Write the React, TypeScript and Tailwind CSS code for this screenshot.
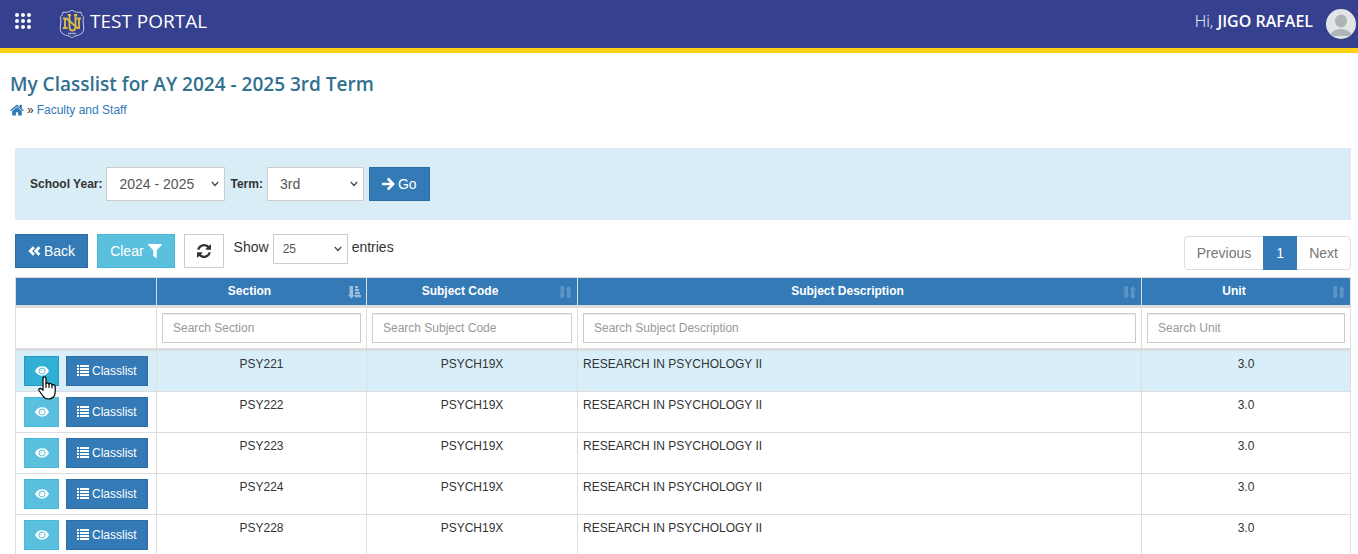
import { FaFilter } from "react-icons/fa";

const columns = [
  { name: "Section", sorted: true },
  { name: "Subject Code", sorted: false },
  { name: "Subject Description", sorted: false },
  { name: "Unit", sorted: false },
];

const classes = [
  { section: "PSY221", code: "PSYCH19X", description: "RESEARCH IN PSYCHOLOGY II", unit: "3.0" },
  { section: "PSY222", code: "PSYCH19X", description: "RESEARCH IN PSYCHOLOGY II", unit: "3.0" },
  { section: "PSY223", code: "PSYCH19X", description: "RESEARCH IN PSYCHOLOGY II", unit: "3.0" },
  { section: "PSY224", code: "PSYCH19X", description: "RESEARCH IN PSYCHOLOGY II", unit: "3.0" },
  { section: "PSY228", code: "PSYCH19X", description: "RESEARCH IN PSYCHOLOGY II", unit: "3.0" },
];

function Crest() {
  return (
    <svg viewBox="0 0 26 30" className="h-[30px] w-[26px]" fill="none" aria-hidden="true">
      <path
        d="M13 1.2C10 3.4 6.500 3.600 3.800 3.200C3.800 5.500 2.800 7 1.200 8C3 12 1 16 1.200 20C1.500 25 6 26 9 26.800C11 27.300 12.300 28 13 29C13.700 28 15 27.300 17 26.800C20 26 24.500 25 24.800 20C25 16 23 12 24.800 8C23.200 7 22.200 5.500 22.200 3.200C19.500 3.600 16 3.400 13 1.200Z"
        stroke="#c3cbe8"
        strokeWidth="1"
      />
      <g stroke="#d8bb48" strokeWidth="1.900">
        <path d="M6 9.500V19M3.800 9.500H7.500L18.500 19H20V9.500M3.800 19H8.500M17.500 9.500H22" />
        <path d="M10.500 6V17.500Q10.500 21.500 13.500 21.500T16.500 17.500V6M8.800 6H12M15 6H18.200" />
      </g>
      <path d="M9 24.500H17" stroke="#c3cbe8" strokeWidth="1.500" strokeDasharray="1.500 .6" />
    </svg>
  );
}

function HomeIcon() {
  return (
    <svg viewBox="0 0 1664 1400" className="mb-px h-3 w-[14px]" fill="currentColor" aria-hidden="true">
      <path
        transform="translate(-64 -180)"
        d="M1472 992v480q0 26-19 45t-45 19h-384v-384h-256v384h-384q-26 0-45-19t-19-45v-480q0-1 .5-3t.5-3l575-474 575 474q1 2 1 6zm223-69l-62 74q-8 9-21 11h-3q-13 0-21-7l-692-577-692 577q-12 8-24 7-13-2-21-11l-62-74q-8-10-7-23.5t11-21.500l719-599q32-26 76-26t76 26l244 204v-195q0-14 9-23t23-9h192q14 0 23 9t9 23v408l219 182q10 8 11 21.500t-7 23.500z"
      />
    </svg>
  );
}

function RefreshIcon() {
  return (
    <svg viewBox="128 128 1536 1536" className="size-[14px]" fill="currentColor" aria-hidden="true">
      <path d="M1639 1056q0 5-1 7-64 268-268 434.500t-478 166.500q-146 0-282.500-55t-243.500-157l-129 129q-19 19-45 19t-45-19-19-45v-448q0-26 19-45t45-19h448q26 0 45 19t19 45-19 45l-137 137q71 66 161 102t187 36q134 0 250-65t186-179q11-17 53-117 8-23 30-23h192q13 0 22.500 9.500t9.500 22.500zm25-800v448q0 26-19 45t-45 19h-448q-26 0-45-19t-19-45 19-45l138-138q-148-137-349-137-134 0-250 65t-186 179q-11 17-53 117-8 23-30 23h-199q-13 0-22.500-9.500t-9.500-22.500v-7q65-268 270-434.500t480-166.500q146 0 284 55.500t245 156.500l130-129q19-19 45-19t45 19 19 45z" />
    </svg>
  );
}

function BackIcon() {
  return (
    <svg viewBox="0 0 13 12" className="h-3 w-[13px]" fill="none" stroke="currentColor" strokeWidth="2.700" aria-hidden="true">
      <path d="M5.900 2.200L2.200 6L5.900 9.800M11.400 2.200L7.700 6L11.400 9.800" />
    </svg>
  );
}

function GoIcon() {
  return (
    <svg viewBox="0 0 13 14" className="h-[14px] w-[13px]" fill="none" stroke="currentColor" strokeWidth="2.500" aria-hidden="true">
      <path d="M0 7H11M5.800 1.500L11.300 7L5.800 12.500" />
    </svg>
  );
}

function EyeIcon() {
  return (
    <svg viewBox="0 0 14 10" className="h-[10px] w-[14px]" aria-hidden="true">
      <path fill="currentColor" d="M7 .3C3.800 .3 1.200 2.300 0 5C1.200 7.700 3.800 9.700 7 9.700S12.800 7.700 14 5C12.800 2.300 10.200 .3 7 .3Z" />
      <circle cx="7" cy="5" r="3" fill="none" stroke="#4bb8d9" strokeWidth=".9" />
      <path d="M5.700 5Q5.700 3.700 7 3.700" fill="none" stroke="#4bb8d9" strokeWidth=".6" />
    </svg>
  );
}

function ListIcon() {
  return (
    <svg viewBox="0 0 12 12" className="size-3" fill="currentColor" aria-hidden="true">
      <path d="M0 0h2v2H0zM3 0h9v2H3zM0 3h2v2H0zM3 3h9v2H3zM0 6h2v2H0zM3 6h9v2H3zM0 9h2v2H0zM3 9h9v2H3z" />
    </svg>
  );
}

function SortIcon({ sorted }: { sorted: boolean }) {
  if (sorted) {
    return (
      <svg viewBox="0 0 14 14" className="size-[14px] opacity-50" fill="currentColor" aria-hidden="true">
        <path d="M1.500 1H5v9h2L3.300 13.500L0 10h1.500zM7 1h3v2.300H7zM7 4h4v2.300H7zM7 7h5v2.300H7zM7 10h6v2.300H7z" />
      </svg>
    );
  }
  return (
    <svg viewBox="0 0 14 14" className="size-[14px] opacity-20" fill="currentColor" aria-hidden="true">
      <path d="M1.500 1H5v9h1.500L3.200 13.500L0 10h1.500zM8 13h3.500V4.500h1.500L9.700 1L6.500 4.500H8z" />
    </svg>
  );
}

function HandCursor() {
  return (
    <svg viewBox="0 0 18 24" className="pointer-events-none absolute top-[20px] left-[14px] z-10 h-6 w-[18px]" aria-hidden="true">
      <path
        d="M5 2.500Q5 .8 6.500.8T8 2.500V7.500Q10 6 11 8Q13 6.500 14 9Q16.500 8 17.200 10.500V16Q17.200 19 15.500 21Q13.500 23 10.500 23Q7 23 5 20L1 14.500Q.3 12.500 2.500 12.300L5 14Z"
        fill="white"
        stroke="black"
        strokeWidth="1.200"
      />
      <path d="M8 7.500v4.500M11 8V12M14 9V12.500" stroke="black" strokeWidth="1.100" fill="none" />
    </svg>
  );
}

function Chevron() {
  return (
    <svg viewBox="0 0 8 6" className="pointer-events-none absolute top-1/2 right-[6px] h-[6px] w-2 -translate-y-1/2" fill="none" stroke="#444" strokeWidth="1.200" aria-hidden="true">
      <path d="M.8 1L4 4.500L7.200 1" />
    </svg>
  );
}

export default function App() {
  return (
    <div className="h-screen overflow-hidden bg-white font-['Liberation_Sans',Arial,sans-serif] text-sm text-[#333]">
      <header className="flex h-[53px] items-center justify-between border-b-5 border-[#fdd116] bg-[#35408e] pr-[2px] pl-[15px] font-['Open_Sans','Noto_Sans',sans-serif] text-white">
        <div className="flex items-center">
          <button type="button" aria-label="Applications" className="mb-[6px]">
            <svg viewBox="0 0 16 16" className="size-4" fill="white">
              {[2, 8, 14].map((y) => [2, 8, 14].map((x) => <circle key={`${x}-${y}`} cx={x} cy={y} r="2" />))}
            </svg>
          </button>
          <div className="ml-7 flex items-center gap-[5px]">
            <Crest />
            <span className="mb-[6px] text-[19px] leading-7">TEST PORTAL</span>
          </div>
        </div>
        <div className="flex items-center gap-[13px]">
          <span className="mb-[6px] text-base font-light">
            Hi, <span className="font-semibold">JIGO RAFAEL</span>
          </span>
          <svg viewBox="0 0 30 30" className="size-[30px]" aria-label="Profile">
            <clipPath id="avatar"><circle cx="15" cy="15" r="15" /></clipPath>
            <g clipPath="url(#avatar)">
              <path fill="#e2e4e6" d="M0 0h30v30H0z" />
              <ellipse cx="15" cy="12" rx="6" ry="6.500" fill="#aeb4b8" />
              <path d="M3 27Q7 20 15 20T27 27Z" fill="#aeb4b8" />
            </g>
          </svg>
        </div>
      </header>

      <div className="px-[10px] pt-4">
        <h1 className="font-['Open_Sans','Noto_Sans',sans-serif] text-[19px] leading-[30px] font-semibold text-[#31708f]">
          My Classlist for AY 2024 - 2025 3rd Term
        </h1>
        <nav className="mt-[3px] flex items-center gap-[3px] text-xs leading-[17px]">
          <a href="#" aria-label="Home" className="text-[#337ab7]"><HomeIcon /></a>
          <span>»</span>
          <a href="#" className="text-[#337ab7]">Faculty and Staff</a>
        </nav>
      </div>

      <main className="mt-[29px] pr-[7px] pl-[15px]">
        <form className="flex h-[72px] items-center bg-[#d9edf7] px-[15px]">
          <label htmlFor="year" className="mr-1 text-xs font-bold">School Year:</label>
          <div className="relative mr-[5px]">
            <select id="year" className="h-[34px] w-[119px] appearance-none border border-[#ccc] bg-white px-3 text-[#555]">
              <option>2024 - 2025</option>
            </select>
            <Chevron />
          </div>
          <label htmlFor="term" className="mr-1 text-xs font-bold">Term:</label>
          <div className="relative mr-[5px]">
            <select id="term" className="h-[34px] w-[97px] appearance-none border border-[#ccc] bg-white px-3 text-[#555]">
              <option>3rd</option>
            </select>
            <Chevron />
          </div>
          <button type="button" className="flex h-[34px] items-center gap-[3px] border border-[#2e6da4] bg-[#337ab7] px-3 text-white">
            <GoIcon />Go
          </button>
        </form>

        <div className="mt-[14px] flex h-[43px] items-start">
          <button type="button" className="mr-[9px] flex h-[34px] items-center gap-[3px] border border-[#2e6da4] bg-[#337ab7] px-3 text-white">
            <BackIcon />Back
          </button>
          <button type="button" className="mr-[9px] flex h-[34px] items-center gap-1 border border-[#46b8da] bg-[#5bc0de] px-3 text-white">
            Clear<FaFilter className="size-[14px]" />
          </button>
          <button type="button" aria-label="Refresh" className="mr-[10px] flex h-[34px] w-10 items-center justify-center border border-[#ccc] bg-white">
            <RefreshIcon />
          </button>
          <label htmlFor="length" className="mt-[3px] mr-1">Show</label>
          <div className="relative mr-1">
            <select id="length" className="block h-[30px] w-[75px] appearance-none border border-[#ccc] bg-white px-[9px] text-xs text-[#555]">
              <option>25</option>
            </select>
            <Chevron />
          </div>
          <span className="mt-[3px]">entries</span>
          <div className="mt-[2px] ml-auto flex h-[34px] rounded border border-[#ddd] text-[#777]">
            <button type="button" className="px-3">Previous</button>
            <button type="button" className="-my-px w-[34px] bg-[#337ab7] text-white">1</button>
            <button type="button" className="px-3">Next</button>
          </div>
        </div>

        <table className="w-full table-fixed border-collapse text-xs [&_td]:border [&_td]:border-[#ddd] [&_th]:border [&_th]:border-[#ddd]">
          <colgroup>
            <col className="w-[141px]" />
            <col className="w-[210px]" />
            <col className="w-[211px]" />
            <col />
            <col className="w-[209px]" />
          </colgroup>
          <thead>
            <tr className="h-[29px] bg-[#337ab7] text-white">
              <td />
              {columns.map((column) => (
                <th key={column.name} scope="col" className="relative pr-6 pb-[2px]">
                  {column.name}
                  <span className="absolute right-1 bottom-[6px]"><SortIcon sorted={column.sorted} /></span>
                </th>
              ))}
            </tr>
            <tr className="h-[43px] [&>td]:border-y-3">
              <td />
              {columns.map((column) => (
                <td key={column.name} className="px-[5px]">
                  <input
                    type="text"
                    aria-label={`Search ${column.name}`}
                    placeholder={`Search ${column.name}`}
                    className="block h-[30px] w-full border border-[#ccc] px-[10px] shadow-[inset_0_1px_1px_rgba(0,0,0,0.075)] placeholder:text-[#999]"
                  />
                </td>
              ))}
            </tr>
          </thead>
          <tbody>
            {classes.map((row, index) => (
              <tr key={row.section} className={index === 0 ? "h-[42px] bg-[#d8effa]" : "h-[41px]"}>
                <td className="px-2 pt-[5px] align-top">
                  <div className="flex gap-[7px]">
                    <div className="relative">
                      <button
                        type="button"
                        aria-label={`View ${row.section}`}
                        className={
                          index === 0
                            ? "flex h-[30px] w-[35px] items-center justify-center border border-[#269abc] bg-[#31b0d5] text-white"
                            : "flex h-[30px] w-[35px] items-center justify-center border border-[#46b8da] bg-[#5bc0de] text-white"
                        }
                      >
                        <EyeIcon />
                      </button>
                      {index === 0 && <HandCursor />}
                    </div>
                    <button type="button" className="flex h-[30px] items-center gap-[3px] border border-[#2e6da4] bg-[#337ab7] px-[10px] text-white">
                      <ListIcon />Classlist
                    </button>
                  </div>
                </td>
                <td className="pt-[5px] text-center align-top">{row.section}</td>
                <td className="pt-[5px] text-center align-top">{row.code}</td>
                <td className="px-[5px] pt-[5px] align-top">{row.description}</td>
                <td className="pt-[5px] text-center align-top">{row.unit}</td>
              </tr>
            ))}
          </tbody>
        </table>
      </main>
    </div>
  );
}
